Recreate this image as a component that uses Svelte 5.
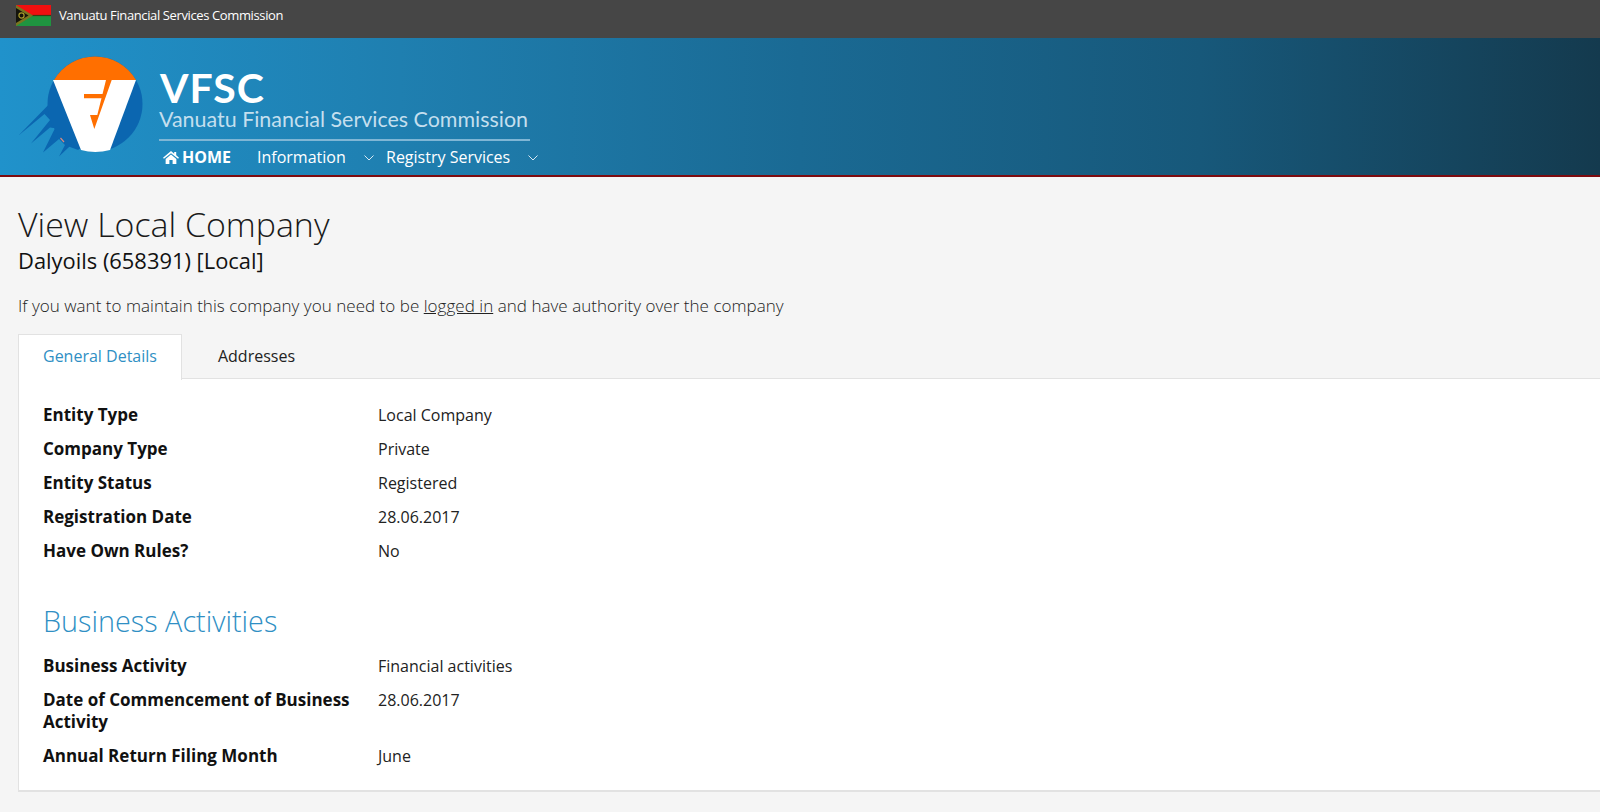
<script>
  const rowsA = [
    ['Entity Type', 'Local Company'],
    ['Company Type', 'Private'],
    ['Entity Status', 'Registered'],
    ['Registration Date', '28.06.2017'],
    ['Have Own Rules?', 'No']
  ];
  const rowsB = [
    ['Business Activity', 'Financial activities'],
    ['Date of Commencement of Business Activity', '28.06.2017'],
    ['Annual Return Filing Month', 'June']
  ];
</script>

<div class="page">
  <div class="topbar">
    <svg class="flag" viewBox="0 0 35 21" width="35" height="21">
      <rect width="35" height="10.5" fill="#f01010"/>
      <rect y="10.5" width="35" height="10.5" fill="#1f9440"/>
      <path d="M14 10.5 H35" stroke="#3f3a12" stroke-width="1.2"/>
      <path d="M0 0 L17 10.5 L0 21 Z" fill="#7a7420"/>
      <path d="M0 3 L12.5 10.5 L0 18 Z" fill="#14140c"/>
      <circle cx="5.5" cy="10.5" r="2.6" fill="none" stroke="#a89a2a" stroke-width="1.2"/>
    </svg>
    <span class="toptext">Vanuatu Financial Services Commission</span>
  </div>

  <header class="header">
    <svg class="logo" viewBox="0 38 159 137" width="159" height="137">
      <path d="M53.3 86.7 L48.3 105 L18.5 135.5 L44.5 114 L50 120 L31 143.5 L50 127.5 L55 128.3 L43 152.5 L59 139 L65 145 L59 156.5 L69.3 146.7 L78.3 150 L90 130 L70 90 Z" fill="#0b66b0"/>
      <circle cx="95" cy="104" r="47.5" fill="#0b66b0"/>
      <path d="M54 80 A47.5 47.5 0 0 1 136 80 Z" fill="#ff6f00"/>
      <path d="M53 80 H136 L110 150 Q95 154 81 150 Z" fill="#fff"/>
      <path d="M106 80 H111.7 L94.3 129 L90 115 H97.3 Z" fill="#ff6f00"/>
      <path d="M84 94 H104 L102.5 98.3 H84 Z" fill="#ff6f00"/>
      <path d="M60.5 138 L64 142" stroke="#d98a80" stroke-width="1.2"/>
    </svg>
    <div class="brand">
      <div class="vfsc">VFSC</div>
      <div class="long">Vanuatu Financial Services Commission</div>
      <div class="rule"></div>
      <nav class="nav">
        <span class="home">
          <svg viewBox="0 0 20 16" width="16" height="13"><path d="M10 0 L0 8.2 L1.2 9.6 L10 2.6 L18.8 9.6 L20 8.2 L16.5 5.3 V1 H14 V3.2 Z M3.3 9.8 V16 H8 V11 H12 V16 H16.7 V9.8 L10 4.3 Z" fill="#fff"/></svg>
          HOME
        </span>
        <span class="info">Information</span>
        <svg class="chev gap" viewBox="0 0 10 6" width="10" height="6"><path d="M.5 .5 L5 5 L9.5 .5" fill="none" stroke="#d8e8f2" stroke-width="1"/></svg>
        <span class="reg">Registry Services</span>
        <svg class="chev" viewBox="0 0 10 6" width="10" height="6"><path d="M.5 .5 L5 5 L9.5 .5" fill="none" stroke="#d8e8f2" stroke-width="1"/></svg>
      </nav>
    </div>
  </header>

  <main class="main">
    <h1>View Local Company</h1>
    <h2>Dalyoils (658391) [Local]</h2>
    <p class="note">If you want to maintain this company you need to be <a href="#login">logged in</a> and have authority over the company</p>

    <div class="tabs">
      <div class="tab active">General Details</div>
      <div class="tab">Addresses</div>
    </div>
    <section class="panel">
      {#each rowsA as r}
        <div class="row"><div class="label">{r[0]}</div><div class="value">{r[1]}</div></div>
      {/each}
      <h3>Business Activities</h3>
      {#each rowsB as r}
        <div class="row"><div class="label">{r[0]}</div><div class="value">{r[1]}</div></div>
      {/each}
    </section>
  </main>
</div>

<style>
  :global(body) { margin: 0; background: #f5f5f5; font-family: "Open Sans", sans-serif; overflow: hidden; }
  .page { width: 1600px; height: 812px; overflow: hidden; }
  .topbar { height: 38px; background: #464646; display: flex; align-items: center; padding-left: 16px; color: #fff; font-size: 13px; letter-spacing: -0.38px; box-sizing: border-box; padding-bottom: 7px; gap: 8px; }
  .toptext { margin-top: -2px; }
  .flag { display: block; }
  .header { height: 139px; box-sizing: border-box; border-bottom: 2px solid #7d0b0f; background: linear-gradient(90deg, #2092cb 0%, #1f7fb0 25%, #1a6a94 50%, #17587a 75%, #143a4e 100%); display: flex; }
  .logo { display: block; flex: none; }
  .brand { width: 371px; display: flex; flex-direction: column; }
  .vfsc { font-family: Lato, sans-serif; font-weight: 700; font-size: 41px; line-height: 40px; color: #fff; letter-spacing: 1px; margin-top: 30px; margin-left: 1px; }
  .long { font-family: Lato, sans-serif; font-weight: 400; font-size: 21.45px; line-height: 22px; color: #c4dfee; white-space: nowrap; }
  .rule { height: 2px; background: #7fb6d5; margin-top: 9px; }
  .nav { display: flex; align-items: center; color: #fff; font-size: 16px; height: 32px; padding-left: 4px; white-space: nowrap; }
  .home { font-weight: 700; display: flex; align-items: center; gap: 3px; width: 94px; flex: none; }
  .info { width: 107px; flex: none; }
  .reg { width: 142px; flex: none; }
  .chev { flex: none; margin-top: 2px; }
  .chev.gap { margin-right: 12px; }
  .main { padding: 25px 0 0 18px; color: #111; }
  h1 { font-weight: 300; font-size: 33.9px; line-height: 44px; margin: 0; color: #1a1a1a; }
  h2 { font-weight: 400; font-size: 21.9px; line-height: 28px; margin: 1px 0 0; color: #111; }
  .note { font-weight: 300; font-size: 17px; letter-spacing: 0.03px; line-height: 24px; margin: 19px 0 0; color: #222; }
  .note a { color: #222; }
  .tabs { display: flex; margin-top: 16px; height: 45px; position: relative; z-index: 1; }
  .tab { font-size: 16px; padding: 0 26px; line-height: 44px; height: 45px; box-sizing: border-box; color: #222; margin-right: 10px; }
  .tab.active { color: #2f8fc4; background: #fff; border: 1px solid #e2e2e2; border-bottom: none; height: 46px; padding: 0 24px; line-height: 42px; }
  .panel { background: #fff; border: 1px solid #e2e2e2; border-right: none; border-bottom-width: 2px; margin-top: -1px; padding: 20px 0 17px 24px; height: 414px; box-sizing: border-box; }
  .row { display: flex; padding: 5px 0 6.5px; }
  .label { width: 335px; font-weight: 700; font-size: 17px; line-height: 22.5px; color: #111; padding-right: 20px; box-sizing: border-box; }
  .value { font-size: 16px; line-height: 22px; color: #222; }
  h3 { font-weight: 300; font-size: 28.8px; line-height: 36px; color: #2f8fc4; margin: 34px 0 10.5px; }
</style>
